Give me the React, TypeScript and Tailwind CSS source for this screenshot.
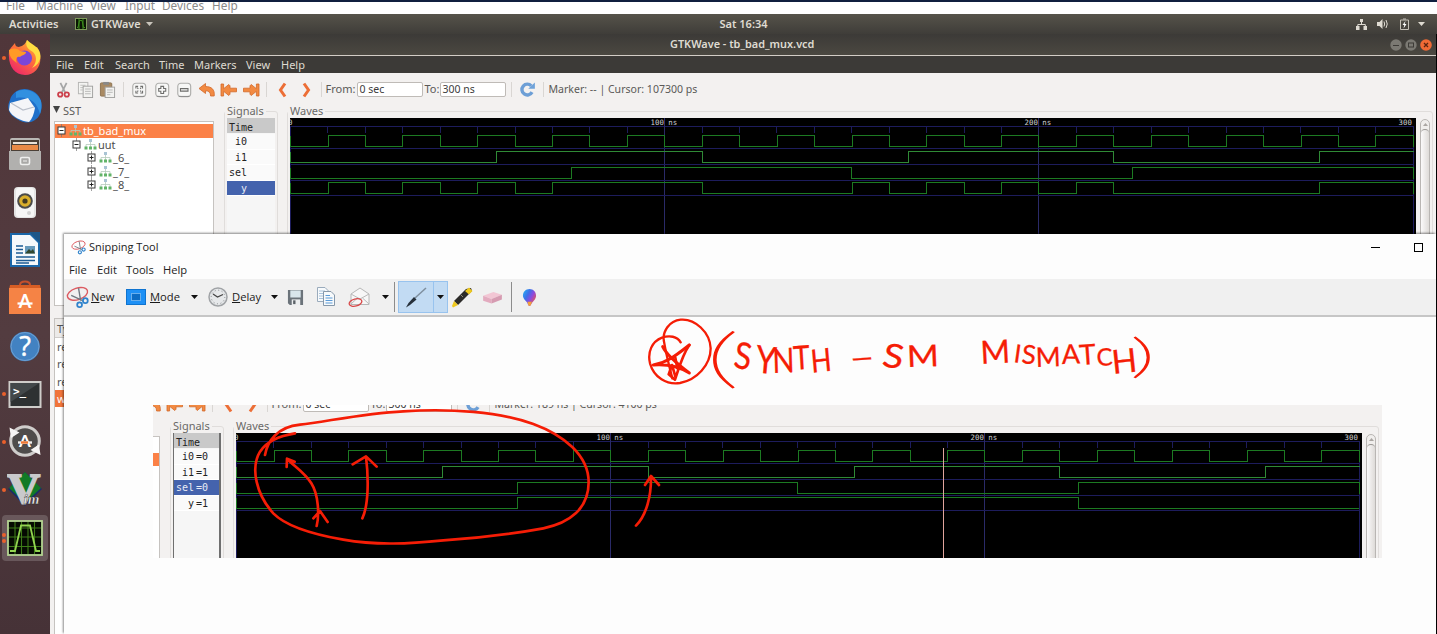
import React from "react";

type Pulse = [number, number];
type Signal = { name: string; value?: string; pulses: Pulse[] };

const NS = 3.742;
const clock: Pulse[] = Array.from({ length: 15 }, (_, i) => [10 + i * 20, 20 + i * 20] as Pulse);
const i1: Pulse[] = [[55, 110], [165, 220], [275, 300.1]];
const sel: Pulse[] = [[75, 150], [225, 300]];

const liveSignals: Signal[] = [
  { name: " i0", pulses: clock },
  { name: " i1", pulses: i1 },
  { name: "sel", pulses: sel },
  {
    name: "  y",
    pulses: [[10, 20], [30, 40], [50, 60], [70, 110], [150, 160], [170, 180], [190, 200], [210, 220], [275, 300]],
  },
];
const snipSignals: Signal[] = [
  { name: " i0", value: "=0", pulses: clock },
  { name: " i1", value: "=1", pulses: i1 },
  { name: "sel", value: "=0", pulses: sel },
  { name: "  y", value: "=1", pulses: [[75, 225]] },
];

function tracePath(pulses: Pulse[], high: number, low: number) {
  let d = `M0.5 ${high}V${low}`;
  for (const [a, b] of pulses) {
    const x1 = Math.round(a * NS + 0.2) + 0.5;
    const x2 = Math.round(b * NS) + 0.5;
    d += `H${x1}V${high}H${x2}`;
    if (b <= 300) d += `V${low}`;
  }
  const last = pulses[pulses.length - 1];
  if (last[1] < 300) d += "H1123";
  return d;
}

function Waves({ signals, marker }: { signals: Signal[]; marker?: number }) {
  const ticks = Array.from({ length: 29 }, (_, i) => Math.round((i + 1) * 10 * NS) + 0.5);
  const dividers = [30.5, 46.5, 62.5, 77.5];
  return (
    <svg width="1126" height="200" viewBox="0 0 1126 200" className="block shrink-0 bg-black" shapeRendering="crispEdges">
      <g stroke="#1d1c5c" fill="none">
        <path d="M0 8.5H1123M0.5 8V200M1123.5 8V200" />
        {ticks.map((x, i) => (
          <path key={x} d={`M${x} 8V15`} stroke={i % 10 === 9 ? "#2b2a70" : "#1d1c5c"} />
        ))}
        <path d="M374.5 0V200M748.5 0V200" stroke="#2a2a68" />
        {dividers.map((y) => (
          <path key={y} d={`M0 ${y}H1123`} />
        ))}
      </g>
      {signals.map((s, i) => {
        const high = [17.5, 33.5, 49.5, 64.5][i];
        return <path key={s.name} d={tracePath(s.pulses, high, high + 11)} fill="none" stroke={i === 1 ? "#2f8a36" : "#1c7a22"} />;
      })}
      {marker !== undefined && <path d={`M${marker} 15V200`} stroke="#e0a49c" />}
      <g fill="#cfcfcf" fontFamily="DejaVu Sans Mono, monospace" fontSize="7.4">
        <text x="-2" y="7">0</text>
        <text x="360.5" y="7" xmlSpace="preserve">100 ns</text>
        <text x="734.5" y="7" xmlSpace="preserve">200 ns</text>
        <text x="1108.500" y="7">300</text>
      </g>
    </svg>
  );
}

function Icon({ children, w = 18, h = 18, box = "0 0 18 18" }: { children: React.ReactNode; w?: number; h?: number; box?: string }) {
  return (
    <svg width={w} height={h} viewBox={box} fill="none" className="block shrink-0">
      {children}
    </svg>
  );
}

const Sep = () => <div className="h-[15px] w-px bg-[#d9d6d3]" />;
const cell = "flex w-[22.4px] shrink-0 items-center justify-center";

function ZoomKey({ d }: { d: string }) {
  return (
    <Icon w={16} h={17}>
      <rect x="2" y="2" width="14.500" height="15" rx="3.500" fill="#f7f7f6" stroke="#aeaeac" strokeWidth="1.300" />
      <path d="M3 16.800H15" stroke="#8a8a88" strokeWidth="1" />
      <path d={d} stroke="#6d6d6b" strokeWidth="1.200" />
    </Icon>
  );
}

function Toolbar({ status }: { status: string }) {
  const orange = "#f28a42";
  const edge = "#d2682a";
  return (
    <div className="flex h-[31px] shrink-0 items-center pl-[2px] pt-[2px] text-[11px] text-[#5a5957]">
      <div className={cell}>
        <Icon w={15} h={18} box="0 0 17 19">
          <path d="M5 1.5L10.8 13M12 1.5L6.2 13" stroke="#a5a6a6" strokeWidth="2" />
          <circle cx="4.8" cy="14.6" r="2.5" stroke="#cc3f4a" strokeWidth="2" />
          <circle cx="12.2" cy="14.6" r="2.5" stroke="#cc3f4a" strokeWidth="2" />
        </Icon>
      </div>
      <div className={cell}>
        <Icon w={17} h={17}>
          <rect x="1.5" y="1.5" width="10" height="12" fill="#f4f4f2" stroke="#b5b5b3" />
          <path d="M3.5 4.5H9M3.5 7H9M3.5 9.5H6" stroke="#c0c0be" />
          <rect x="6.5" y="5.5" width="10" height="12" fill="#f2f2f0" stroke="#a1a19f" />
          <path d="M8.5 8.5H14.5M8.5 11H14.5M8.5 13.5H14.5" stroke="#b8b8b6" />
        </Icon>
      </div>
      <div className={cell}>
        <Icon w={17} h={17}>
          <rect x="1.5" y="2" width="12" height="14" rx="1" fill="#a98a62" stroke="#8b7250" />
          <rect x="4.5" y="1" width="6" height="3" fill="#898989" />
          <rect x="6.5" y="6.5" width="10" height="11" fill="#f2f2f0" stroke="#a1a19f" />
          <path d="M8.5 9.5H14.5M8.5 12H14.5M8.5 14.5H12" stroke="#b8b8b6" />
        </Icon>
      </div>
      <div className="flex w-[9px] justify-center"><Sep /></div>
      <div className={cell}><ZoomKey d="M5.500 8V5.500H8M10.500 5.500H13V8M13 10.500V13H10.500M8 13H5.500V10.500M7 7L8.200 8.200M11.500 7L10.300 8.200M7 11.500L8.200 10.300M11.500 11.500L10.300 10.300" /></div>
      <div className={cell}><ZoomKey d="M7.700 5.500H10.800V7.900H13.200V11H10.800V13.400H7.700V11H5.300V7.900H7.700Z" /></div>
      <div className={cell}><ZoomKey d="M5 8H13.500V10.800H5Z" /></div>
      <div className={cell}>
        <Icon w={18} h={16} box="0 0 18 16">
          <path d="M1 6.5L7.500 1.500V4.500C13.500 4.500 17 7.500 16.200 14H12.600C12.600 10.500 11 8.800 7.500 8.800V11.500Z" fill={orange} stroke={edge} strokeWidth=".8" />
        </Icon>
      </div>
      <div className={cell}>
        <Icon w={18} h={16} box="0 0 18 16">
          <path d="M1 2H3.600V6.700L8.800 2.500L10 3.800V6.200H16.500V9.800H10V12.200L8.800 13.500L3.600 9.300V14H1Z" fill={orange} stroke={edge} strokeWidth=".8" />
        </Icon>
      </div>
      <div className={cell}>
        <Icon w={18} h={16} box="0 0 18 16">
          <path d="M17 2H14.400V6.700L9.200 2.500L8 3.800V6.200H1.500V9.800H8V12.200L9.200 13.500L14.400 9.300V14H17Z" fill={orange} stroke={edge} strokeWidth=".8" />
        </Icon>
      </div>
      <div className="flex w-[8px] justify-center"><Sep /></div>
      <div className="flex w-[24px] justify-center pr-px">
        <Icon w={12} h={16} box="0 0 12 16"><path d="M9 1.500L4.500 8L9 14.500" stroke="#ec6e36" strokeWidth="3" /></Icon>
      </div>
      <div className="flex w-[24px] justify-center">
        <Icon w={12} h={16} box="0 0 12 16"><path d="M3 1.500L7.500 8L3 14.500" stroke="#ec6e36" strokeWidth="3" /></Icon>
      </div>
      <div className="flex w-[7px] justify-start pl-[2px]"><Sep /></div>
      <span className="w-[31px] whitespace-nowrap">From:</span>
      <div className="flex h-[15px] w-[66px] shrink-0 items-center rounded-[2px] border border-[#bfbbb7] bg-white pl-[2px] text-[10.500px] text-[#3c3c3c]">0 sec</div>
      <span className="w-[17px] whitespace-nowrap pl-[2px]">To:</span>
      <div className="flex h-[15px] w-[66px] shrink-0 items-center rounded-[2px] border border-[#bfbbb7] bg-white pl-[2px] text-[10.500px] text-[#3c3c3c]">300 ns</div>
      <div className="flex w-[12px] justify-center"><Sep /></div>
      <div className="flex w-[20px] justify-center">
        <Icon w={17} h={17}>
          <path d="M13.8 11.8A5.7 5.7 0 1 1 13 5.2" stroke="#6d9fd6" strokeWidth="3.600" />
          <path d="M16.8 1.5V8.2H9.8Z" fill="#6fa2d9" />
        </Icon>
      </div>
      <div className="flex w-[11px] justify-center"><Sep /></div>
      <span className="whitespace-pre text-[10.550px]">{status}</span>
    </div>
  );
}

function TreeIcon() {
  return (
    <Icon w={13} h={11} box="0 0 13 11">
      <rect x="5" y="0" width="3" height="3" fill="#a9c4d4" />
      <path d="M6.5 3V8M2 8V5.5H11V8" stroke="#b5cabb" strokeWidth=".8" />
      <path d="M.5 7.5H3.5V10.5H.5ZM5 7.5H8V10.5H5ZM9.5 7.5H12.5V10.5H9.5Z" fill="#62b468" />
    </Icon>
  );
}

function Expander({ open }: { open?: boolean }) {
  return (
    <Icon w={9} h={13} box="0 0 9 13">
      <path d="M4.5 0V3M4.5 9V13" stroke="#777" strokeWidth=".7" />
      <rect x="1" y="3" width="7" height="7" fill="#fff" stroke="#3a3a3a" />
      <path d={open ? "M2.5 6.5H6.5" : "M2.5 6.5H6.5M4.5 4.5V8.5"} stroke="#222" />
    </Icon>
  );
}

function Tree({ selected }: { selected: string }) {
  const rows = [
    { name: "tb_bad_mux", pad: "pl-[2px]", open: true },
    { name: "uut", pad: "pl-[17px]", open: true },
    { name: "_6_", pad: "pl-[32px]", open: false },
    { name: "_7_", pad: "pl-[32px]", open: false },
    { name: "_8_", pad: "pl-[32px]", open: false },
  ];
  return (
    <div className="h-[185px] w-[160px] border border-[#c6c3c0] bg-white pt-[2px] text-[11px] text-[#4c4c4c]">
      {rows.map((r) => (
        <div
          key={r.name}
          className={`flex h-[13.5px] items-center ${r.pad} ${r.name === selected ? "bg-[#fb8147] text-white" : ""}`}
        >
          <Expander open={r.open} />
          <span className="w-[3px]" />
          <TreeIcon />
          <span className="pl-px leading-none">{r.name}</span>
        </div>
      ))}
    </div>
  );
}

const frame = "mt-[7px] h-[420px] rounded-[3px] border border-[#e0dddb]";
const legend = "-mt-[8px] h-[14px] w-max bg-[#f3f1f0] px-[2px] text-[11px] leading-[14px] text-[#6a6967]";

function WaveBody(p: { status: string; tree: string; signals: Signal[]; active: number; marker?: number; edge?: boolean }) {
  return (
    <div className="flex h-[560px] w-[1386px] shrink-0 flex-col bg-[#f3f1f0]">
      <Toolbar status={p.status} />
      <div className="flex">
        <div className="flex w-[174px] shrink-0 flex-col pl-[4px]">
          <div className="flex h-[17px] items-start gap-[3px] text-[11px] leading-[14px] text-[#5a5957]">
            <svg width="7" height="7" viewBox="0 0 7 7" className="-ml-px mt-[2px]"><path d="M0 0H7L3.5 7Z" fill="#444" /></svg>
            SST
          </div>
          <Tree selected={p.tree} />
          <div className="mt-[12px] w-[160px] border border-[#c6c3c0] bg-white text-[11px] text-[#555]">
            <div className="h-[19px] border-b border-[#cfccca] bg-[#eceae8] pl-[2px] leading-[19px]">Type</div>
            <div className="h-[17.3px] pl-[2px] leading-[17px]">reg</div>
            <div className="h-[17.3px] pl-[2px] leading-[17px]">reg</div>
            <div className="h-[17.3px] pl-[2px] leading-[17px]">reg</div>
            <div className="h-[17px] bg-[#f0743a] pl-[2px] leading-[17px] text-white">wire</div>
            <div className="h-[240px]" />
          </div>
        </div>
        <div className={`${frame} w-[54px] shrink-0`}>
          <div className={legend}>Signals</div>
          <div
            className={`flex h-[380px] flex-col bg-[#f6f6f6] font-['DejaVu_Sans_Mono'] text-[10px] text-[#222] ${
              p.edge ? "ml-[2px] w-[48px] border-l border-r-2 border-[#6f6f6f]" : "ml-[2px] w-[48px]"
            }`}
          >
            <div className="mb-px h-[15px] bg-[#c9c9c9] pl-[2px] leading-[19px]">Time</div>
            {p.signals.map((s, i) => (
              <div
                key={s.name}
                className={`flex h-[15.5px] gap-[2px] whitespace-pre border-b border-white pl-[2px] leading-[16px] ${
                  i === p.active ? "bg-[#4463ad] text-[#e8ecf6]" : "bg-[#fafafa]"
                }`}
              >
                <span>{s.name}</span>
                {s.value && <span>{s.value}</span>}
              </div>
            ))}
          </div>
        </div>
        <div className={`${frame} ml-[9px] flex w-[1146px] shrink-0 flex-col pl-[2px]`}>
          <div className="-ml-[2px] flex">
            <div className={legend}>Waves</div>
          </div>
          <div className="flex">
            <Waves signals={p.signals} marker={p.marker} />
            <div className="ml-[4px] mt-px flex h-[400px] w-[10px] shrink-0 flex-col rounded-t-[5px] border border-[#b9b6b3] bg-[#f0eeec]">
              <div className="flex h-[9px] items-center justify-center">
                <svg width="5" height="3" viewBox="0 0 5 3"><path d="M0 3H5L2.5 0Z" fill="#aaa6a2" /></svg>
              </div>
              <div className="flex-1 rounded-t-[5px] border-t border-[#9a9794] bg-linear-to-r from-[#fbfafa] to-[#dedbd8]" />
            </div>
          </div>
        </div>
      </div>
    </div>
  );
}

const launcher: { name: string; dots: number; art: React.ReactNode }[] = [
  {
    name: "firefox",
    dots: 1,
    art: (
      <>
        <path d="M2 17C1 9 5 7 8 3C8 6 10 7 12 7C15 6 18 5 20 0C22 3 24 4 27 8L30 7C38 20 31 35 18 35C8 35 2 26 2 17Z" fill="url(#ff)" />
        <path d="M20 0C18 5 20 9 26 12C31 17 29 24 25 28C35 23 35 14 31 9C28 5 24 4 20 0Z" fill="#ffde42" />
        <circle cx="17.5" cy="18" r="7.6" fill="#7a46d8" />
        <path d="M2 10C6 8 10 8 13 11L19 12C19 15 15 15 13 17C10 16 8 19 10 23C5 20 2 16 2 10Z" fill="#ff9a27" />
      </>
    ),
  },
  {
    name: "thunderbird",
    dots: 0,
    art: (
      <>
        <path d="M3 12C5 4 14 -1 23 2C34 5 37 17 33 26C29 35 18 37 10 31C2 27 -1 20 3 12Z" fill="#1f6fc9" />
        <path d="M9 4C18 -1 30 3 34 13C35 18 34 23 33 26C30 14 22 8 9 10Z" fill="#3190e0" />
        <path d="M3 15L21 10L28 20C27 26 25 31 22 34C14 33 5 29 2 22Z" fill="#f4f5f8" />
        <path d="M4 15L16 22L27 19" stroke="#b9bfca" strokeWidth="1.2" />
      </>
    ),
  },
  {
    name: "files",
    dots: 0,
    art: (
      <>
        <rect x="3" y="2" width="30" height="32" rx="2" fill="#b9b7b4" />
        <rect x="4" y="4" width="28" height="11" fill="#4b4037" />
        <path d="M6 6H30V8H6Z" fill="#e9e2d8" />
        <path d="M5 9H31V14H5Z" fill="#e98a46" />
        <path d="M2 15H34V33Q34 34 33 34H3Q2 34 2 33Z" fill="#b1b0ae" />
        <rect x="13.5" y="21.500" width="9" height="7" rx="1.500" fill="#a9a8a6" stroke="#efefee" strokeWidth="1.6" />
        <path d="M16 25H20" stroke="#efefee" />
      </>
    ),
  },
  {
    name: "rhythmbox",
    dots: 0,
    art: (
      <>
        <rect x="7" y="3" width="22" height="31" rx="4" fill="#e4e4e4" />
        <rect x="9" y="4" width="18" height="29" rx="3" fill="#f6f6f6" />
        <circle cx="18" cy="17" r="7.8" fill="#4a4a4a" />
        <circle cx="18" cy="17" r="5.8" fill="#d9ae2c" />
        <circle cx="18" cy="17" r="2.6" fill="#423a22" />
        <circle cx="22" cy="29" r="2" fill="#d2d2d2" />
      </>
    ),
  },
  {
    name: "writer",
    dots: 0,
    art: (
      <>
        <path d="M3 1H25L33 9V35H3Z" fill="#1a66a8" />
        <path d="M5 3H23L31 11V33H5Z" fill="#f5f8fb" />
        <path d="M22 0H33V11Z" fill="#1d5688" />
        <path d="M9 14H16M9 17.500H16M9 21H16M9 25H28M9 28.500H28M9 31H22" stroke="#1d5b94" strokeWidth="1.500" />
        <rect x="18" y="14" width="10" height="7.500" fill="#6699bb" />
        <path d="M18 21.500L22 17L24 19L26 17L28 21.500Z" fill="#31472f" />
      </>
    ),
  },
  {
    name: "software",
    dots: 0,
    art: (
      <>
        <path d="M13 7V5Q13 1.500 18 1.500Q23 1.500 23 5V9" stroke="#c4502c" strokeWidth="2" />
        <path d="M3 5H33L34 10H2Z" fill="#d65d24" />
        <path d="M2 8H34V34H2Z" fill="#f58345" />
        <text x="18" y="28" textAnchor="middle" fontSize="18" fontWeight="700" fill="#fff" fontFamily="Lato">A</text>
        <path d="M10.500 23.500H25.500" stroke="#fff" strokeWidth="2.200" />
      </>
    ),
  },
  {
    name: "help",
    dots: 0,
    art: (
      <>
        <circle cx="18" cy="18.500" r="14.800" fill="#4282c2" />
        <circle cx="18" cy="18.500" r="14" stroke="#78a7d6" strokeWidth=".8" />
        <text x="18" y="28" textAnchor="middle" fontSize="27" fill="#fff" stroke="#fff" strokeWidth=".5" fontFamily="Open Sans">?</text>
      </>
    ),
  },
  {
    name: "terminal",
    dots: 1,
    art: (
      <>
        <rect x="1.500" y="5" width="33" height="27" fill="#cfcdca" />
        <rect x="3.500" y="7" width="29" height="23" fill="#2e3132" />
        <path d="M3.500 7H32.500L3.500 26Z" fill="#43484a" />
        <text x="6" y="19" fontSize="11" fontWeight="700" fill="#fff" fontFamily="DejaVu Sans Mono">&gt;_</text>
      </>
    ),
  },
  {
    name: "updater",
    dots: 1,
    art: (
      <>
        <circle cx="18" cy="17" r="13.500" fill="#4e4c4b" />
        <circle cx="18" cy="17" r="14.300" stroke="#cfcdcb" strokeWidth="3" />
        <path d="M2.500 3.500L4 14L12.500 8.500ZM33.500 31L32 20.500L23.500 26Z" fill="#f6f5f4" />
        <text x="18" y="22.500" textAnchor="middle" fontSize="17" fontWeight="700" fill="#fff" fontFamily="Lato">A</text>
        <path d="M11 18.500H25" stroke="#f1efed" strokeWidth="2.400" />
        <path d="M14 18.500H21" stroke="#ee7733" strokeWidth="2.400" />
      </>
    ),
  },
  {
    name: "vim",
    dots: 1,
    art: (
      <>
        <path d="M18 0L35 17L18 34L1 17Z" fill="#1a2a6a" />
        <path d="M18 0L34 16L18 31L2 16Z" fill="#117a26" />
        <text x="17" y="31" textAnchor="middle" fontSize="38" fontWeight="700" fill="#c9c9cb" stroke="#c9c9cb" strokeWidth="1.600" fontFamily="Liberation Serif" transform="translate(18 0) scale(1.200 1.120) translate(-18 -3.500)">V</text>
        <text x="16.500" y="31.500" fontSize="15" fontStyle="italic" fontWeight="700" fill="#f0f0f2" stroke="#2a2a2a" strokeWidth=".4" fontFamily="Liberation Serif">im</text>
      </>
    ),
  },
  {
    name: "gtkwave",
    dots: 2,
    art: (
      <>
        <rect x="1" y="1" width="34" height="34" fill="#050a02" stroke="#b4d492" strokeWidth="1.800" />
        <path d="M8 2V34M14.500 2V34M21 2V34M27.500 2V34M2 8H34M2 17H34M2 26.500H34" stroke="#3d7b18" strokeWidth="1.100" />
        <path d="M3 31H8L14 5.500H23L29 31H33" stroke="#92d450" strokeWidth="1.800" />
      </>
    ),
  },
];

function Launcher() {
  return (
    <div className="flex w-[50px] shrink-0 flex-col bg-linear-to-b from-[#50363a] via-[#533c40] to-[#463237]">
      <svg width="0" height="0" className="absolute">
        <linearGradient id="ff" x1="1" y1="0" x2=".3" y2="1">
          <stop offset="0" stopColor="#ffca3a" />
          <stop offset=".5" stopColor="#ff7139" />
          <stop offset="1" stopColor="#ee2a68" />
        </linearGradient>
      </svg>
      {launcher.map((l) => (
        <div key={l.name} className="flex h-[48px] shrink-0 items-center">
          <div className="z-10 flex w-[6px] flex-col items-end gap-[2px]">
            {Array.from({ length: l.dots }, (_, i) => (
              <span key={i} className="h-[4px] w-[4px] rounded-full bg-[#e9602c]" />
            ))}
          </div>
          <div className={`-ml-[4px] flex h-[46px] w-[46px] items-center justify-center rounded-[4px] ${l.name === "gtkwave" ? "bg-[#76666a]/70" : ""}`}>
            <Icon w={36} h={36} box="0 0 36 36">{l.art}</Icon>
          </div>
        </div>
      ))}
    </div>
  );
}

function SnipScissors({ size }: { size: number }) {
  return (
    <Icon w={size} h={size} box="0 0 22 22">
      <ellipse cx="11" cy="7.500" rx="10" ry="5.500" transform="rotate(-18 11 7.500)" stroke="#dc5a60" strokeWidth="1.300" />
      <path d="M12 2L14 14M5 9L16 14" stroke="#707880" strokeWidth="1.300" />
      <circle cx="13" cy="18" r="2.300" stroke="#2f83cc" strokeWidth="1.700" />
      <circle cx="18.500" cy="14" r="2.300" stroke="#2f83cc" strokeWidth="1.700" />
    </Icon>
  );
}

const Caret = () => (
  <svg width="7" height="4" viewBox="0 0 7 4" className="block shrink-0"><path d="M0 0H7L3.500 4Z" fill="#111" /></svg>
);

function SnipToolbar() {
  return (
    <div className="flex h-[38px] shrink-0 items-center border-b-2 border-[#c6c6c6] bg-[#f0f0f0] pl-[2px] text-[11.200px] text-[#1a1a1a]">
      <SnipScissors size={23} />
      <span className="w-[37px] pl-[2px]"><u>N</u>ew</span>
      <Icon w={20} h={16} box="0 0 20 16">
        <rect x=".5" y=".5" width="19" height="15" fill="#1e90f5" stroke="#0f74d0" />
        <rect x="5.500" y="4.500" width="9" height="7" fill="#0c6cc4" stroke="#bfe0ff" strokeDasharray="1 1" />
      </Icon>
      <span className="w-[45px] pl-[4px]"><u>M</u>ode</span>
      <Caret />
      <div className="w-[10px]" />
      <Icon w={20} h={20} box="0 0 20 20">
        <circle cx="10" cy="10" r="9" fill="#e6e8ea" stroke="#a0a3a6" strokeWidth="1.500" />
        <circle cx="10" cy="10" r="6.800" stroke="#85888b" strokeDasharray="1 2.560" />
        <path d="M5 7L9.500 10L15 7.500" stroke="#444" strokeWidth="1.200" />
      </Icon>
      <span className="w-[43px] pl-[4px]"><u>D</u>elay</span>
      <Caret />
      <div className="w-[9px]" />
      <Icon w={17} h={17} box="0 0 18 17">
        <path d="M1 .5H17V16.500H3L1 14.500Z" fill="#6b737a" />
        <rect x="3.500" y="1" width="11" height="7.500" fill="#d9e6ec" />
        <rect x="5" y="10.500" width="9" height="6" fill="#eceeef" />
        <rect x="6.500" y="11.500" width="2.500" height="4" fill="#5b6268" />
      </Icon>
      <div className="w-[12px]" />
      <Icon w={20} h={20} box="0 0 20 20">
        <path d="M1.500 .5H9L12.500 4V14.500H1.500Z" fill="#f7fafc" stroke="#9aabbc" />
        <path d="M3 4H9M3 6.500H7M3 9H7M3 11.500H7" stroke="#a8c2dc" />
        <path d="M7.500 4.500H15L18.500 8V18.500H7.500Z" fill="#f7fafc" stroke="#8698aa" />
        <path d="M9.500 8.500H14M9.500 11H16.500M9.500 13.500H16.500M9.500 16H16.500" stroke="#5b9bd8" />
      </Icon>
      <div className="w-[12px]" />
      <Icon w={22} h={20} box="0 0 22 20">
        <path d="M3 7L12 1L21 7V17.500H3Z" fill="#f7f7f7" stroke="#b6b6b6" />
        <path d="M3 7L12 12L21 7M3 17L9.500 11M21 17L14.500 11" stroke="#b9b9b9" />
        <ellipse cx="7.500" cy="15.500" rx="6.500" ry="3.500" transform="rotate(-15 7.500 15.500)" stroke="#d84848" strokeWidth="1.300" />
      </Icon>
      <div className="w-[12px]" />
      <Caret />
      <div className="ml-[5px] mr-[3px] h-[30px] w-px bg-[#8c8c8c]" />
      <div className="flex h-[32px] w-[50px] shrink-0 border border-[#98c3ee] bg-[#c2dbf3]">
        <div className="flex w-[35px] items-center justify-center border-r border-[#98c3ee]">
          <Icon w={22} h={21} box="0 0 22 21">
            <path d="M10 11L21 1" stroke="#7e8f9e" strokeWidth="1.500" />
            <path d="M9 10L11.500 12.500L5 18L1 20.500L3.500 16Z" fill="#26303a" />
          </Icon>
        </div>
        <div className="flex flex-1 items-center justify-center"><Caret /></div>
      </div>
      <div className="w-[3px]" />
      <Icon w={22} h={21} box="0 0 22 21">
        <path d="M3 14L15 2L20 1L21 4L7 18Z" fill="#2c2b29" />
        <path d="M14 4L18 .5L21.500 4L18 7.500ZM3 14L7 18L2 20.500L1 19Z" fill="#efc91e" />
        <path d="M10 8L12 10" stroke="#8f8a78" />
      </Icon>
      <div className="w-[9px]" />
      <Icon w={21} h={15} box="0 0 22 16">
        <path d="M1 6L12 2L21 5L10 9.500Z" fill="#f2c6d4" />
        <path d="M1 6L10 9.500V14.500L1 11.500Z" fill="#e3abbf" />
        <path d="M10 9.500L21 5V10L10 14.500Z" fill="#d69bb1" />
      </Icon>
      <div className="ml-[8px] mr-[10px] h-[30px] w-px bg-[#8c8c8c]" />
      <Icon w={15} h={19} box="0 0 16 20">
        <linearGradient id="p3" x1="0" y1="0" x2="1" y2=".7">
          <stop offset="0" stopColor="#22b6f5" />
          <stop offset=".4" stopColor="#3f6fe8" />
          <stop offset=".65" stopColor="#8b4be0" />
          <stop offset="1" stopColor="#f0564a" />
        </linearGradient>
        <path d="M8 1C12 1 15 4 15 8C15 12 11 14 9.500 18Q8 20 6.500 18C6 14 1 12 1 8C1 4 4 1 8 1Z" fill="url(#p3)" />
        <path d="M5.800 14.500H10.500L9.300 18Q8 19.800 6.700 18Z" fill="#f2a33a" />
      </Icon>
    </div>
  );
}

function Ink() {
  return (
    <svg width="1371" height="316" viewBox="64 318 1371 316" fill="none" className="pointer-events-none absolute left-0 top-[84px]">
      <g stroke="#f51d06" strokeLinecap="round" strokeLinejoin="round">
        <g transform="translate(640 315) scale(.33333)" strokeWidth="7">
          <path d="M122 82C112 64 88 60 66 68C35 80 22 112 30 145C42 188 80 210 120 204C170 195 212 150 212 100C210 52 165 10 122 14C88 17 66 50 72 80C76 104 84 140 97 190" />
          <path d="M68 95C76 112 100 138 148 174C122 158 90 146 40 150C84 142 112 118 148 90" strokeWidth="9" />
          <path d="M148 90C128 118 116 160 105 194L86 178L96 150L106 184M106 128L112 160" strokeWidth="8" />
        </g>
        <g transform="translate(150 395) scale(.33333)" strokeWidth="8">
          <path d="M345 180C352 140 380 96 450 89C530 80 640 55 760 49C900 40 1050 50 1150 87C1240 120 1316 180 1316 262C1316 340 1260 384 1180 400C1080 418 980 430 880 436C780 446 680 452 580 434C500 420 410 396 370 355C320 300 300 220 330 170C352 136 390 122 435 115" />
          <path d="M500 393C508 360 506 300 484 265C464 232 430 212 412 192M410 216L411 191L434 200M490 370L510 348L533 381" />
          <path d="M637 370C656 330 656 250 648 185M608 208L648 184L680 215" />
          <path d="M1458 392C1490 360 1504 300 1503 245M1485 270L1503 243L1527 270" />
        </g>
      </g>
      <g fill="#f51d06" stroke="#f51d06" strokeWidth=".3" fontFamily="Lato, sans-serif">
        <text transform="scale(2.100 1)" x="336" y="380" fontSize="64" fontWeight="100" strokeWidth="1">(</text>
        <text transform="scale(.85 1)" y="367">
          <tspan x="862" y="367" fontSize="37" rotate="10">S</tspan>
          <tspan x="888" y="372" fontSize="38" rotate="6">Y</tspan>
          <tspan x="909" y="373" fontSize="34" rotate="-2">N</tspan>
          <tspan x="934" y="370" fontSize="33" rotate="-4">T</tspan>
          <tspan x="955" y="373" fontSize="32" rotate="-6">H</tspan>
        </text>
        <text transform="scale(1.600 1)" x="531.500" y="368" fontSize="28" rotate="-6">–</text>
        <text transform="scale(1.150 1)">
          <tspan x="766" y="366" fontSize="33" rotate="10">S</tspan>
          <tspan x="789" y="367" fontSize="30" rotate="-2">M</tspan>
        </text>
        <text>
          <tspan x="981" y="364" fontSize="32" rotate="-3">M</tspan>
          <tspan x="1013" y="362" fontSize="25" rotate="8">I</tspan>
          <tspan x="1021" y="363" fontSize="26" rotate="6">S</tspan>
          <tspan x="1036" y="367" fontSize="27" rotate="-2">M</tspan>
          <tspan x="1062" y="364" fontSize="27" rotate="-2">A</tspan>
          <tspan x="1080" y="365" fontSize="28" rotate="-4">T</tspan>
          <tspan x="1097" y="366" fontSize="24" rotate="-3">C</tspan>
          <tspan x="1113" y="374" fontSize="33" rotate="-6">H</tspan>
        </text>
        <text transform="scale(2.100 1)" x="538.500" y="372" fontSize="46" fontWeight="100" strokeWidth="1">)</text>
      </g>
    </svg>
  );
}

function SnippingTool() {
  return (
    <div className="absolute left-[64px] top-[234px] flex h-[400px] w-[1372px] flex-col overflow-hidden bg-[#fdfdfd] font-['Open_Sans'] shadow-[-1px_-1px_2px_rgba(0,0,0,0.45)]">
      <div className="flex h-[27px] shrink-0 items-center pl-[7px] pr-[13px]">
        <SnipScissors size={15} />
        <span className="pl-[3px] text-[11px] text-[#222]">Snipping Tool</span>
        <div className="flex-1" />
        <div className="mr-[34px] h-px w-[9px] bg-black" />
        <div className="h-[9px] w-[9px] border border-black" />
      </div>
      <div className="flex h-[18px] shrink-0 items-center pl-[5px] pt-px text-[11.200px] text-[#222]">
        <span className="w-[28px]">File</span>
        <span className="w-[29px]">Edit</span>
        <span className="w-[37px]">Tools</span>
        <span>Help</span>
      </div>
      <SnipToolbar />
      <div className="ml-[89px] mt-[88px] flex h-[153px] w-[1229px] shrink-0 overflow-hidden font-['Noto_Sans']">
        <div className="-ml-[157px] -mt-[17px]">
          <WaveBody status="Marker: 189 ns | Cursor: 4100 ps" tree="uut" signals={snipSignals} active={2} marker={707.5} edge />
        </div>
      </div>
      <Ink />
    </div>
  );
}

export default function App() {
  return (
    <div className="relative flex h-[634px] w-[1437px] flex-col overflow-hidden bg-[#f3f1f0] font-['Noto_Sans',sans-serif]">
      <div className="flex h-[14px] shrink-0 overflow-hidden border-t-2 border-[#101f3f] bg-white pl-[6px] text-[11.800px] leading-[6px] text-[#8a8a8a]">
        <span className="w-[30px]">File</span>
        <span className="w-[54px]">Machine</span>
        <span className="w-[35px]">View</span>
        <span className="w-[37px]">Input</span>
        <span className="w-[50px]">Devices</span>
        <span>Help</span>
      </div>
      <div className="flex h-[20px] shrink-0 items-center bg-linear-to-b from-[#56534a] to-[#3f3d39] text-[10.800px] font-semibold text-[#dfdbd2]">
        <span className="w-[75px] pl-[9px] text-[11.100px]">Activities</span>
        <Icon w={12} h={12} box="0 0 12 12">
          <rect x=".5" y=".5" width="11" height="11" fill="#0a1404" stroke="#7f9a5c" />
          <path d="M2 9.500H3L4.500 2.500H7L8.500 9.500H10M4 1V11M8 1V11" stroke="#3c8d1c" />
        </Icon>
        <span className="w-[59px] pl-[4px]">GTKWave</span>
        <svg width="7" height="4" viewBox="0 0 7 4"><path d="M0 0H7L3.500 4Z" fill="#c9c5bc" /></svg>
        <span className="ml-[566.500px] whitespace-nowrap text-[11px]">Sat 16:34</span>
        <div className="flex-1" />
        <div className="flex items-center pr-[12px]">
          <Icon w={11} h={11} box="0 0 11 11">
            <path d="M4 0H7V3H4ZM0 7H3.500V11H0ZM7.500 7H11V11H7.500Z" fill="#dfdbd2" />
            <path d="M5.500 3V5.500M1.800 7V5.500H9.300V7" stroke="#dfdbd2" />
          </Icon>
          <div className="w-[10px]" />
          <Icon w={11} h={10} box="0 0 11 10">
            <path d="M0 3H2.500L5.500 0V10L2.500 7H0Z" fill="#dfdbd2" />
            <path d="M7 2.500Q8.300 5 7 7.500M9 1Q11.500 5 9 9" stroke="#dfdbd2" />
          </Icon>
          <div className="w-[12px]" />
          <Icon w={9} h={12} box="0 0 9 12">
            <path d="M.500 2H8.500V11.500H.500ZM3 1H6" stroke="#c3bfb6" />
            <path d="M5.500 3L2.500 7H4.300L3.500 10.500L6.500 6H4.700Z" fill="#fff" />
          </Icon>
          <div className="w-[9px]" />
          <svg width="7" height="4" viewBox="0 0 7 4"><path d="M0 0H7L3.500 4Z" fill="#dfdbd2" /></svg>
        </div>
      </div>
      <div className="flex h-[600px] shrink-0">
        <Launcher />
        <div className="flex w-[1386px] shrink-0 flex-col">
          <div className="flex h-[22px] shrink-0 items-center border-b border-[#d3cdc6] bg-linear-to-b from-[#3c3a37] to-[#4b4841] text-[10.900px] font-semibold text-[#dfdbd2]">
            <span className="ml-[620px] whitespace-nowrap">GTKWave - tb_bad_mux.vcd</span>
            <div className="flex-1" />
            <div className="flex items-center gap-[3px] pr-[4px]">
              <Icon w={12} h={12} box="0 0 12 12">
                <circle cx="6" cy="6" r="5.700" fill="#7b7973" /><path d="M3 6.500H9" stroke="#3d3b37" />
              </Icon>
              <Icon w={12} h={12} box="0 0 12 12">
                <circle cx="6" cy="6" r="5.700" fill="#7b7973" /><rect x="3.500" y="4" width="5" height="4" stroke="#3d3b37" />
              </Icon>
              <Icon w={12} h={12} box="0 0 12 12">
                <circle cx="6" cy="6" r="5.800" fill="#f06a35" /><path d="M4 4L8 8M8 4L4 8" stroke="#5a2410" strokeWidth="1.300" />
              </Icon>
            </div>
          </div>
          <div className="flex h-[17px] shrink-0 items-center bg-[#3c3a37] pl-[6px] pt-[2px] text-[11px] text-[#dfdbd2]">
            <span className="w-[28px]">File</span>
            <span className="w-[31px]">Edit</span>
            <span className="w-[44px]">Search</span>
            <span className="w-[35px]">Time</span>
            <span className="w-[52px]">Markers</span>
            <span className="w-[35px]">View</span>
            <span>Help</span>
          </div>
          <WaveBody status="Marker: -- | Cursor: 107300 ps" tree="tb_bad_mux" signals={liveSignals} active={3} />
        </div>
        <div className="w-px shrink-0 bg-black" />
      </div>
      <SnippingTool />
    </div>
  );
}
